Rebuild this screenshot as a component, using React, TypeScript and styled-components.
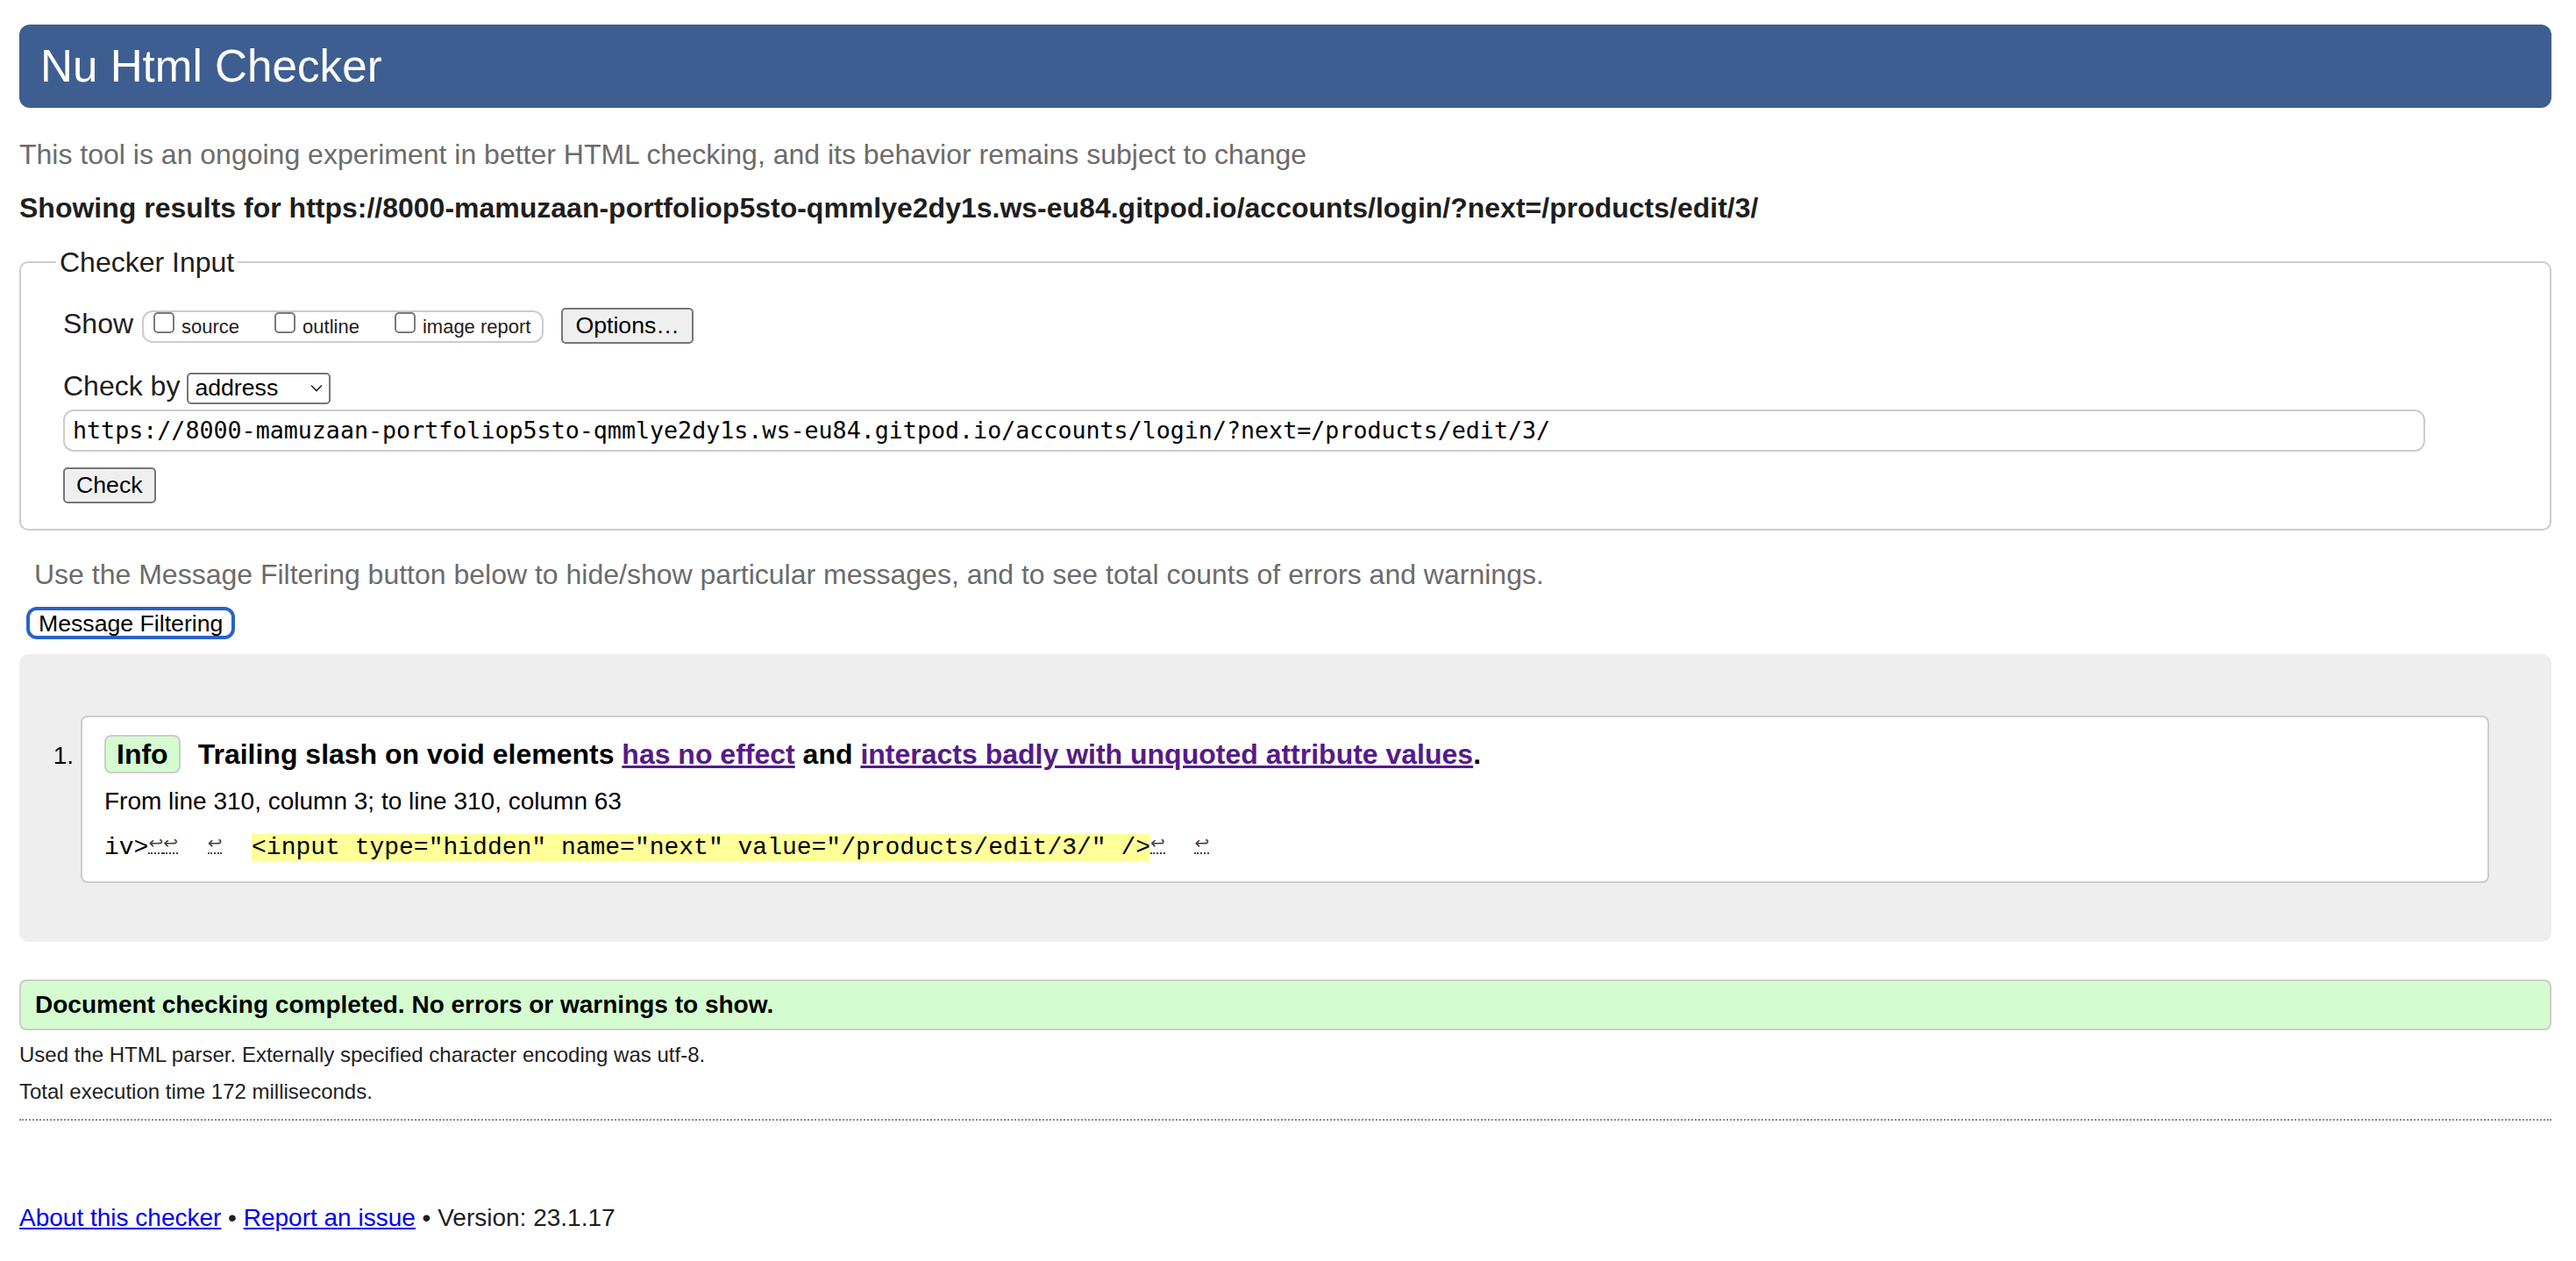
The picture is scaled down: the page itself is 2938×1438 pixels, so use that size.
import styled, { createGlobalStyle } from "styled-components";

const GlobalStyle = createGlobalStyle`
  html, body {
    margin: 0;
    padding: 0;
    background: #fff;
  }
  body {
    font-family: "Liberation Sans", Arial, sans-serif;
    color: #222;
  }
`;

const Page = styled.div`
  padding: 28px 28px 40px 22px;
`;

const Banner = styled.h1`
  margin: 0;
  height: 95px;
  padding: 0 24px;
  background: #3e5e91;
  color: #fff;
  font-size: 51.2px;
  font-weight: normal;
  line-height: 95px;
  border-radius: 12px;
`;

const Intro = styled.p`
  margin: 33px 0 0;
  font-size: 32px;
  line-height: 40px;
  color: #6b6b6b;
`;

const Showing = styled.p`
  margin: 21px 0 0;
  font-size: 32px;
  line-height: 40px;
  font-weight: bold;
  color: #1e1e1e;
`;

const Fieldset = styled.fieldset`
  margin: 22px 0 0;
  padding: 30px 142px 29px 48px;
  border: 2px solid #ccc;
  border-radius: 10px;
  min-width: 0;
`;

const Legend = styled.legend`
  margin-left: -8px;
  padding: 0 4px;
  font-size: 32px;
  line-height: 40px;
  color: #1e1e1e;
`;

const Row = styled.div<{ $top?: number }>`
  display: flex;
  align-items: baseline;
  margin-top: ${(p) => p.$top ?? 0}px;
`;

const FieldLabel = styled.span`
  font-size: 32px;
  line-height: 40px;
  color: #1e1e1e;
  margin-right: 8px;
`;

const ShowGroup = styled.div`
  display: inline-flex;
  align-items: flex-start;
  box-sizing: border-box;
  height: 37px;
  margin-left: 2px;
  padding: 0 13px 0 11px;
  gap: 40px;
  border: 2px solid #ccc;
  border-radius: 12px;
`;

const Choice = styled.label`
  display: inline-flex;
  align-items: baseline;
  gap: 8px;
  font-size: 22px;
  line-height: 26px;
  color: #1e1e1e;
`;

const Box = styled.span`
  display: inline-block;
  box-sizing: border-box;
  width: 24px;
  height: 24px;
  border: 2px solid #7a7a7a;
  border-radius: 5px;
  background: #fff;
`;

const Button = styled.button<{ $pad?: number }>`
  box-sizing: border-box;
  height: 41px;
  padding: 0 ${(p) => p.$pad ?? 13}px;
  font-family: "Liberation Sans", Arial, sans-serif;
  font-size: 26.67px;
  color: #000;
  background: #efefef;
  border: 2px solid #767676;
  border-radius: 5px;
`;

const OptionsButton = styled(Button)`
  margin-left: 20px;
`;

const SelectBox = styled.div`
  display: inline-flex;
  align-items: center;
  justify-content: space-between;
  box-sizing: border-box;
  width: 164px;
  height: 36px;
  padding: 0 7px 0 7px;
  border: 2px solid #767676;
  border-radius: 5px;
  background: #fff;
  font-size: 26.67px;
  color: #000;
`;

const UrlInput = styled.input`
  display: block;
  box-sizing: border-box;
  width: 100%;
  height: 48px;
  margin-top: 6px;
  padding: 0 9px;
  border: 2px solid #ccc;
  border-radius: 12px;
  font-family: "DejaVu Sans Mono", "Liberation Mono", monospace;
  font-size: 26.67px;
  color: #000;
  background: #fff;
  outline: none;
`;

const CheckRow = styled.div`
  margin-top: 18px;
`;

const Hint = styled.p`
  margin: 30px 0 0 17px;
  font-size: 32px;
  line-height: 40px;
  color: #6b6b6b;
`;

const FilterButton = styled.button`
  display: block;
  box-sizing: border-box;
  height: 37px;
  margin: 17px 0 0 8px;
  padding: 0 10px;
  font-family: "Liberation Sans", Arial, sans-serif;
  font-size: 26.67px;
  color: #000;
  background: #fff;
  border: 4px solid #2a62c8;
  border-radius: 12px;
`;

const Results = styled.div`
  margin-top: 17px;
  padding: 70px 71px 67px 0;
  background: #eee;
  border-radius: 10px;
`;

const ItemRow = styled.div`
  display: flex;
  align-items: baseline;
`;

const ItemNum = styled.span`
  flex: 0 0 70px;
  box-sizing: border-box;
  padding-right: 8px;
  text-align: right;
  font-size: 28px;
  color: #000;
`;

const Message = styled.div`
  flex: 1;
  padding: 20px 25px;
  background: #fff;
  border: 2px solid #ccc;
  border-radius: 8px;
  color: #000;
`;

const MessageTitle = styled.p`
  margin: 0;
  font-size: 32px;
  line-height: 44px;
  font-weight: bold;
`;

const Badge = styled.span`
  display: inline-block;
  box-sizing: border-box;
  height: 44px;
  margin-right: 20px;
  padding: 0 12px;
  line-height: 40px;
  background: #d4fcd0;
  border: 2px solid #ccc;
  border-radius: 8px;
`;

const Link = styled.a<{ $visited?: boolean }>`
  color: ${(p) => (p.$visited ? "#551a8b" : "#0000ee")};
  text-decoration: underline;
`;

const Location = styled.p`
  margin: 14px 0 0;
  font-size: 28px;
  line-height: 36px;
`;

const Extract = styled.p`
  margin: 17px 0 0;
  font-family: "Liberation Mono", "Courier New", monospace;
  font-size: 28px;
  line-height: 36px;
  white-space: pre;
`;

const Highlight = styled.b`
  font-weight: normal;
  background: #ffff99;
`;

const Lf = styled.span`
  display: inline-block;
  width: 16.8px;
  overflow: hidden;
  text-align: center;
  font-family: "DejaVu Sans", sans-serif;
  font-size: 20px;
  line-height: 22px;
  color: #444;
  border-bottom: 2px dotted #444;
`;

const Success = styled.p`
  margin: 43px 0 0;
  padding: 0 16px;
  font-size: 28px;
  line-height: 54px;
  font-weight: bold;
  color: #000;
  background: #d4fcd0;
  border: 2px solid #ccc;
  border-radius: 8px;
`;

const Detail = styled.p<{ $top: number }>`
  margin: ${(p) => p.$top}px 0 0;
  font-size: 24px;
  line-height: 30px;
  color: #1e1e1e;
`;

const Rule = styled.hr`
  margin: 16px 0 0;
  border: 0;
  border-top: 2px dotted #888;
`;

const Footer = styled.p`
  margin: 93px 0 0;
  font-size: 28px;
  line-height: 36px;
  color: #1e1e1e;
`;

const URL =
  "https://8000-mamuzaan-portfoliop5sto-qmmlye2dy1s.ws-eu84.gitpod.io/accounts/login/?next=/products/edit/3/";

function Chevron() {
  return (
    <svg width="14" height="9" viewBox="0 0 14 9" fill="none">
      <path d="M1 1.5 L7 7.5 L13 1.5" stroke="#222" strokeWidth="1.6" />
    </svg>
  );
}

export default function App() {
  return (
    <>
      <GlobalStyle />
      <Page>
        <Banner>Nu Html Checker</Banner>
        <Intro>
          This tool is an ongoing experiment in better HTML checking, and its behavior remains
          subject to change
        </Intro>
        <Showing>Showing results for {URL}</Showing>

        <Fieldset>
          <Legend>Checker Input</Legend>
          <Row>
            <FieldLabel>Show</FieldLabel>
            <ShowGroup>
              <Choice>
                <Box />
                source
              </Choice>
              <Choice>
                <Box />
                outline
              </Choice>
              <Choice>
                <Box />
                image report
              </Choice>
            </ShowGroup>
            <OptionsButton $pad={14}>Options…</OptionsButton>
          </Row>
          <Row $top={28}>
            <FieldLabel>Check by</FieldLabel>
            <SelectBox>
              address
              <Chevron />
            </SelectBox>
          </Row>
          <UrlInput readOnly value={URL} />
          <CheckRow>
            <Button>Check</Button>
          </CheckRow>
        </Fieldset>

        <Hint>
          Use the Message Filtering button below to hide/show particular messages, and to see total
          counts of errors and warnings.
        </Hint>
        <FilterButton>Message Filtering</FilterButton>

        <Results>
          <ItemRow>
            <ItemNum>1.</ItemNum>
            <Message>
              <MessageTitle>
                <Badge>Info</Badge>
                Trailing slash on void elements <Link $visited href="#">has no effect</Link> and{" "}
                <Link $visited href="#">interacts badly with unquoted attribute values</Link>.
              </MessageTitle>
              <Location>From line 310, column 3; to line 310, column 63</Location>
              <Extract>
                iv&gt;<Lf>↩</Lf><Lf>↩</Lf>{"  "}<Lf>↩</Lf>{"  "}
                <Highlight>&lt;input type="hidden" name="next" value="/products/edit/3/" /&gt;</Highlight>
                <Lf>↩</Lf>{"  "}<Lf>↩</Lf>
              </Extract>
            </Message>
          </ItemRow>
        </Results>

        <Success>Document checking completed. No errors or warnings to show.</Success>
        <Detail $top={13}>Used the HTML parser. Externally specified character encoding was utf-8.</Detail>
        <Detail $top={12}>Total execution time 172 milliseconds.</Detail>
        <Rule />
        <Footer>
          <Link href="#">About this checker</Link> • <Link href="#">Report an issue</Link> • Version:
          23.1.17
        </Footer>
      </Page>
    </>
  );
}
